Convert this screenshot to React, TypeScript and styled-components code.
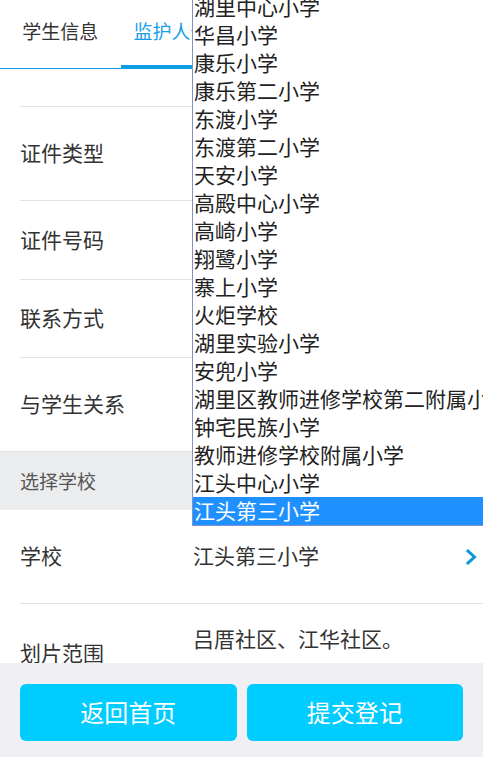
import React from "react";
import styled, { createGlobalStyle } from "styled-components";

const Global = createGlobalStyle`
  html, body { margin: 0; padding: 0; background: #fff; }
  body { font-family: "Noto Sans CJK SC", "Noto Sans", sans-serif; color: #333; }
  * { box-sizing: border-box; }
`;

const Page = styled.div`
  position: relative;
  width: 483px;
  height: 757px;
  display: flex;
  flex-direction: column;
  overflow: hidden;
  background: #fff;
`;

const TabBar = styled.div`
  display: flex;
  height: 69px;
  flex-shrink: 0;
  border-bottom: 1px solid #0d9ee6;
`;

const Tab = styled.div<{ $active?: boolean }>`
  position: relative;
  flex: 1;
  text-align: center;
  padding-top: 19px;
  font-size: 19px;
  line-height: 24px;
  color: ${(p) => (p.$active ? "#1a9de6" : "#333")};
  white-space: nowrap;
  &::after {
    content: "";
    display: ${(p) => (p.$active ? "block" : "none")};
    position: absolute;
    left: 0;
    right: 0;
    bottom: -1px;
    height: 4px;
    background: #0d9ee6;
  }
`;

const Content = styled.div`
  flex: 1;
  overflow: hidden;
  display: flex;
  flex-direction: column;
`;

const TopGap = styled.div`
  height: 37px;
  flex-shrink: 0;
`;

const Row = styled.div<{ $h: number; $border?: boolean }>`
  display: flex;
  align-items: center;
  height: ${(p) => p.$h}px;
  flex-shrink: 0;
  margin-left: 20px;
  border-top: ${(p) => (p.$border ? "1px solid #e2e2e2" : "none")};
`;

const Label = styled.div`
  width: 173px;
  flex-shrink: 0;
  font-size: 21px;
  line-height: 28px;
  color: #333;
  align-self: center;
  margin-bottom: 3px;
`;

const Value = styled.div<{ $pad?: number }>`
  flex: 1;
  font-size: 21px;
  line-height: 28px;
  color: #333;
  padding-top: ${(p) => p.$pad ?? 0}px;
  align-self: ${(p) => (p.$pad ? "flex-start" : "center")};
  margin-bottom: ${(p) => (p.$pad ? 0 : 3)}px;
`;

const Chevron = styled.svg`
  width: 11px;
  height: 16px;
  margin-right: 6px;
  flex-shrink: 0;
`;

const Section = styled.div`
  height: 59px;
  flex-shrink: 0;
  background: #ebecee;
  border-top: 1px solid #e2e2e2;
  padding-left: 20px;
  padding-bottom: 2px;
  display: flex;
  align-items: center;
  font-size: 19px;
  color: #555;
`;

const BottomBar = styled.div`
  height: 94px;
  flex-shrink: 0;
  background: #efeff4;
  display: flex;
  gap: 10px;
  padding: 21px 20px 16px;
`;

const Button = styled.button`
  flex: 1;
  height: 57px;
  border: none;
  border-radius: 6px;
  background: #00ccff;
  color: #fff;
  font-family: "Noto Sans CJK SC", sans-serif;
  font-size: 24px;
  padding: 0 0 2px;
`;

const Dropdown = styled.div`
  position: absolute;
  top: -8px;
  left: 192px;
  width: 300px;
  background: #fff;
  border: 1px solid #7f93c8;
`;

const Option = styled.div<{ $selected?: boolean }>`
  height: 28px;
  line-height: 26px;
  padding-left: 1px;
  font-size: 21px;
  white-space: nowrap;
  color: ${(p) => (p.$selected ? "#fff" : "#222")};
  background: ${(p) => (p.$selected ? "#1e90ff" : "transparent")};
`;

const schools = [
  "湖里中心小学",
  "华昌小学",
  "康乐小学",
  "康乐第二小学",
  "东渡小学",
  "东渡第二小学",
  "天安小学",
  "高殿中心小学",
  "高崎小学",
  "翔鹭小学",
  "寨上小学",
  "火炬学校",
  "湖里实验小学",
  "安兜小学",
  "湖里区教师进修学校第二附属小学",
  "钟宅民族小学",
  "教师进修学校附属小学",
  "江头中心小学",
  "江头第三小学",
];

export default function App() {
  return (
    <>
      <Global />
      <Page>
        <TabBar>
          <Tab>学生信息</Tab>
          <Tab $active>监护人信息</Tab>
          <Tab>学校信息</Tab>
          <Tab>确认信息</Tab>
        </TabBar>
        <Content>
          <TopGap />
          <Row $h={94} $border>
            <Label>证件类型</Label>
          </Row>
          <Row $h={79} $border>
            <Label>证件号码</Label>
          </Row>
          <Row $h={78} $border>
            <Label>联系方式</Label>
          </Row>
          <Row $h={94} $border>
            <Label>与学生关系</Label>
          </Row>
          <Section>选择学校</Section>
          <Row $h={93}>
            <Label>学校</Label>
            <Value>江头第三小学</Value>
            <Chevron viewBox="0 0 11 16">
              <path d="M2 2 L8.5 8 L2 14" fill="none" stroke="#0b98d8" strokeWidth="3" strokeLinecap="square" />
            </Chevron>
          </Row>
          <Row $h={100} $border>
            <Label>划片范围</Label>
            <Value $pad={20}>吕厝社区、江华社区。</Value>
          </Row>
        </Content>
        <BottomBar>
          <Button>返回首页</Button>
          <Button>提交登记</Button>
        </BottomBar>
        <Dropdown>
          {schools.map((s) => (
            <Option key={s} $selected={s === "江头第三小学"}>
              {s}
            </Option>
          ))}
        </Dropdown>
      </Page>
    </>
  );
}
